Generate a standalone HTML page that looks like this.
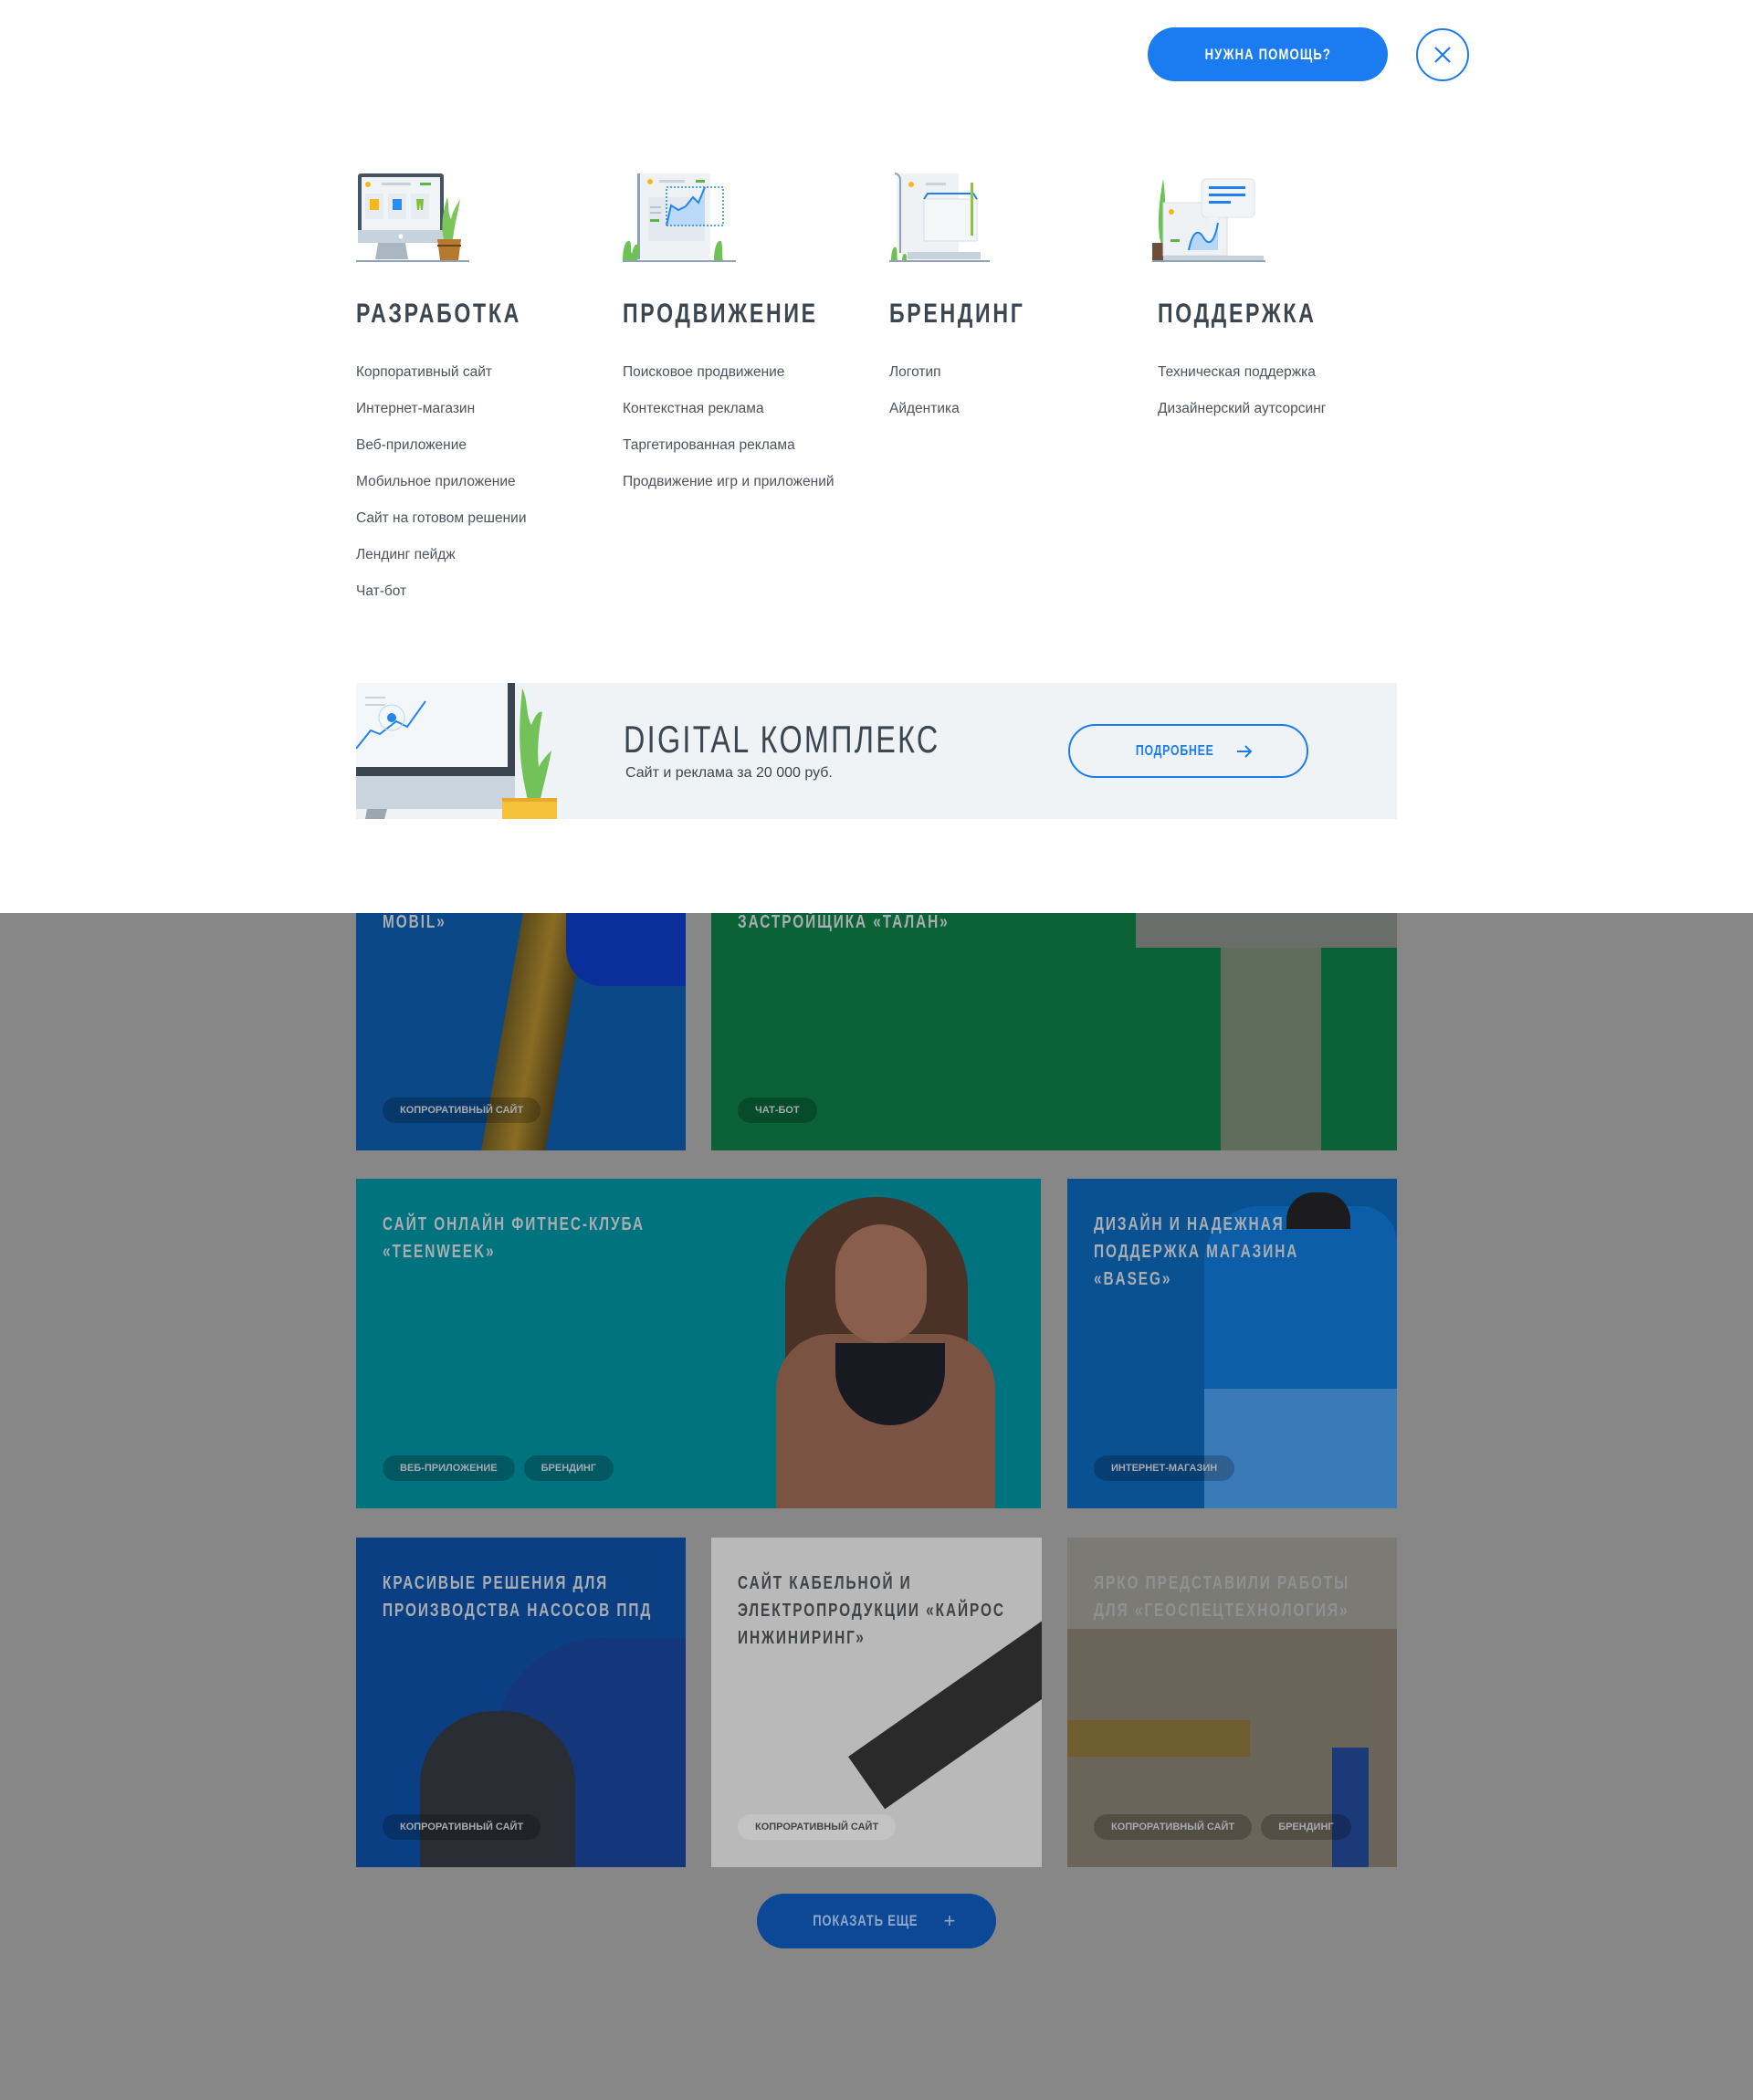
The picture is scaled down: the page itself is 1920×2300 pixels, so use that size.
<!DOCTYPE html>
<html><head><meta charset="utf-8">
<style>
*{margin:0;padding:0;box-sizing:border-box}
body{width:1920px;height:2300px;background:#878787;font-family:"Liberation Sans",sans-serif;position:relative;overflow:hidden}
.sx{display:inline-block;transform:scaleX(.77);transform-origin:left center;white-space:nowrap}
.sc{display:inline-block;transform:scaleX(.77);transform-origin:center center;white-space:nowrap}
#panel{position:absolute;left:0;top:0;width:1920px;height:1000px;background:#fff}
.help{position:absolute;left:1257px;top:30px;width:263px;height:59px;border-radius:30px;background:#1a7cf0;color:#fff;font-weight:bold;font-size:17px;letter-spacing:1.5px;display:flex;align-items:center;justify-content:center}
.close{position:absolute;left:1551px;top:31px;width:58px;height:58px;border:2px solid #1a7cf0;border-radius:50%}
.col{position:absolute;top:188px}
.col svg{display:block}
.col h2{position:absolute;top:139px;left:0;white-space:nowrap;font-size:30px;font-weight:bold;letter-spacing:3.5px;color:#3b4650}
.col ul{position:absolute;top:210px;left:0;list-style:none;white-space:nowrap}
.col li{font-size:15.5px;color:#4b545c;height:40px;line-height:20px}
.banner{position:absolute;left:390px;top:748px;width:1140px;height:149px;background:#f0f3f6;overflow:hidden}
.banner h3{position:absolute;left:293px;top:38px;font-size:42px;font-weight:normal;letter-spacing:3px;color:#3b4650}
.banner p{position:absolute;left:295px;top:90px;font-size:16px;color:#3b4650}
.more{position:absolute;left:780px;top:45px;width:263px;height:59px;border:2px solid #1a7cf0;border-radius:30px;color:#1a7cf0;font-weight:bold;font-size:16px;letter-spacing:1px;display:flex;align-items:center;justify-content:center}
.card{position:absolute;overflow:hidden}
.card .t{position:absolute;left:29px;top:35px;font-size:20px;font-weight:bold;letter-spacing:2.5px;line-height:30px;color:#a8adb2;z-index:2}
.tags{position:absolute;left:29px;bottom:0;height:58px;display:flex;gap:10px;z-index:2}
.tag{height:28px;padding:0 19px;border-radius:14px;background:rgba(0,0,0,.22);color:#a6aaae;font-size:11px;font-weight:bold;letter-spacing:0;line-height:28px;white-space:nowrap}
.show{position:absolute;left:829px;top:2074px;width:262px;height:60px;border-radius:30px;background:#0c4896;color:#8fa7c8;font-weight:bold;font-size:17px;letter-spacing:1px;display:flex;align-items:center;justify-content:center}
</style></head><body>
<div id="panel">
  <div class="help"><span class="sc">НУЖНА ПОМОЩЬ?</span></div>
  <div class="close"><svg width="54" height="54" viewBox="0 0 54 54"><path d="M19 19L35 35M35 19L19 35" stroke="#1a7cf0" stroke-width="2.2"/></svg></div>

  <div class="col" style="left:390px">
    <svg width="125" height="102" viewBox="0 0 125 102">
      <rect x="2" y="2" width="94" height="75" rx="3" fill="#465360"/>
      <rect x="6" y="6" width="86" height="58" fill="#f1f4f7"/>
      <rect x="2" y="64" width="94" height="14" fill="#c7d3dc"/>
      <circle cx="49" cy="71" r="2.5" fill="#fff"/>
      <path d="M24 78h30l3 18H21z" fill="#aab7c2"/>
      <circle cx="13" cy="14" r="3" fill="#f6b81c"/>
      <rect x="28" y="12" width="32" height="3" fill="#c9d2da"/><rect x="70" y="12" width="12" height="3" fill="#5db549"/>
      <rect x="10" y="24" width="20" height="28" fill="#e7ecf0"/><rect x="35" y="24" width="20" height="28" fill="#e7ecf0"/><rect x="60" y="24" width="20" height="28" fill="#e7ecf0"/>
      <path d="M15 30h10v12h-10z" fill="#f7b917"/><path d="M40 30h10v12h-10z" fill="#2d8cf0"/><path d="M66 30h8l-1 12h-2l-1-8-1 8h-2z" fill="#7cbf3a"/>
      <path d="M96 74c-4-16 0-34 4-46 2 10 0 16 4 24 2-10 6-14 10-22 -2 14 -6 26 -8 44z" fill="#7cc55a"/>
      <path d="M89 74h26l-3 23h-20z" fill="#b57a2e"/><rect x="89" y="80" width="26" height="2" fill="#6b4317"/>
      <rect x="0" y="97" width="124" height="2" fill="#8ea2b4"/>
    </svg>
    <h2><span class="sx">РАЗРАБОТКА</span></h2>
    <ul><li>Корпоративный сайт</li><li>Интернет-магазин</li><li>Веб-приложение</li><li>Мобильное приложение</li><li>Сайт на готовом решении</li><li>Лендинг пейдж</li><li>Чат-бот</li></ul>
  </div>

  <div class="col" style="left:682px">
    <svg width="125" height="102" viewBox="0 0 125 102">
      <rect x="16" y="2" width="80" height="94" fill="#eef2f5"/><rect x="16" y="2" width="3" height="94" fill="#8ea2b4"/>
      <circle cx="30" cy="11" r="3" fill="#f6b81c"/><rect x="40" y="9" width="28" height="3" fill="#c9d2da"/><rect x="80" y="9" width="10" height="3" fill="#5db549"/>
      <rect x="28" y="28" width="62" height="48" fill="#e3e9ee"/>
      <rect x="30" y="38" width="12" height="2" fill="#b9c4cd"/><rect x="30" y="44" width="12" height="2" fill="#b9c4cd"/><rect x="30" y="52" width="10" height="3" fill="#5db549"/>
      <path d="M48 59L53 37 61 42 69 38 77 28 83 34 90 17V59z" fill="#bcd9f7"/>
      <path d="M48 59L53 37 61 42 69 38 77 28 83 34 90 17" fill="none" stroke="#1f86ee" stroke-width="2"/>
      <rect x="48" y="17" width="62" height="42" fill="none" stroke="#1f86ee" stroke-width="1.5" stroke-dasharray="2 2"/>
      <path d="M0 98c0-16 4-24 8-22 2 6 0 10 2 14 2-10 6-14 8-6 0 4-2 8-2 14z" fill="#6cc253"/>
      <path d="M100 98c0-16 4-24 8-22 2 8 0 14 2 22z" fill="#6cc253"/>
      <rect x="0" y="97" width="124" height="2" fill="#8ea2b4"/>
    </svg>
    <h2><span class="sx">ПРОДВИЖЕНИЕ</span></h2>
    <ul><li>Поисковое продвижение</li><li>Контекстная реклама</li><li>Таргетированная реклама</li><li>Продвижение игр и приложений</li></ul>
  </div>

  <div class="col" style="left:974px">
    <svg width="125" height="102" viewBox="0 0 125 102">
      <path d="M6 2h70v90H18c-6 0-10-4-10-10V8c0-4-2-6-2-6z" fill="#eef2f5"/>
      <path d="M6 2c3 0 6 3 6 7v80" fill="none" stroke="#8ea2b4" stroke-width="2"/>
      <circle cx="24" cy="14" r="3" fill="#f6b81c"/><rect x="40" y="12" width="22" height="3" fill="#c9d2da"/>
      <rect x="38" y="30" width="58" height="46" fill="#f4f6f8" stroke="#d5dde3"/>
      <path d="M38 30l4-6h50l4 6" fill="none" stroke="#1f7fee" stroke-width="2"/>
      <rect x="89" y="12" width="3" height="58" fill="#8cc63f"/>
      <rect x="20" y="88" width="80" height="8" fill="#c7d3dc"/>
      <path d="M2 98c0-14 4-18 6-14 1 4 0 8 1 14z" fill="#6cc253"/><path d="M14 98c0-8 3-10 5-6v6z" fill="#6cc253"/>
      <rect x="0" y="97" width="110" height="2" fill="#8ea2b4"/>
    </svg>
    <h2><span class="sx">БРЕНДИНГ</span></h2>
    <ul><li>Логотип</li><li>Айдентика</li></ul>
  </div>

  <div class="col" style="left:1262px">
    <svg width="125" height="102" viewBox="0 0 125 102">
      <path d="M10 80c-6-20-2-50 2-72 3 20 2 40 4 72z" fill="#6cc253"/>
      <rect x="0" y="78" width="12" height="20" fill="#6b4f3a"/>
      <rect x="12" y="34" width="70" height="58" fill="#eef2f5" stroke="#d5dde3"/>
      <circle cx="21" cy="44" r="3" fill="#f6b81c"/><rect x="20" y="74" width="10" height="3" fill="#5db549"/>
      <path d="M40 86c4-20 10-24 16-14 6 10 12 6 16-16v30z" fill="#b8d6f6"/>
      <path d="M40 86c4-20 10-24 16-14 6 10 12 6 16-16" fill="none" stroke="#1f86ee" stroke-width="2"/>
      <rect x="12" y="92" width="110" height="6" fill="#c7d3dc"/>
      <rect x="54" y="8" width="58" height="42" rx="5" fill="#f1f4f7" stroke="#dde3e8"/>
      <path d="M62 50l4 8 6-8z" fill="#f1f4f7"/>
      <rect x="62" y="16" width="40" height="3" fill="#1f7fee"/><rect x="62" y="24" width="40" height="3" fill="#1f7fee"/><rect x="62" y="32" width="24" height="3" fill="#1f7fee"/>
      <rect x="0" y="97" width="124" height="2" fill="#8ea2b4"/>
    </svg>
    <h2 style="left:6px"><span class="sx">ПОДДЕРЖКА</span></h2>
    <ul style="left:6px"><li>Техническая поддержка</li><li>Дизайнерский аутсорсинг</li></ul>
  </div>

  <div class="banner">
    <svg width="250" height="149" viewBox="0 0 250 149" style="position:absolute;left:0;top:0">
      <rect x="0" y="0" width="172" height="100" fill="#f4f7fa"/>
      <rect x="166" y="0" width="8" height="100" fill="#3a4550"/>
      <rect x="0" y="92" width="174" height="10" fill="#3a4550"/>
      <rect x="0" y="102" width="174" height="36" fill="#c9d4dd"/>
      <path d="M12 138h22l-3 11H10z" fill="#9aa6b0"/>
      <path d="M0 72l16-20 10 4 18-14 12 6 20-28" fill="none" stroke="#1f86ee" stroke-width="2"/>
      <circle cx="39" cy="38" r="5" fill="#1f86ee"/><circle cx="39" cy="38" r="14" fill="none" stroke="#b9d6f6"/>
      <rect x="10" y="15" width="22" height="2" fill="#c9d2da"/><rect x="10" y="23" width="22" height="2" fill="#c9d2da"/>
      <path d="M190 136c-10-40-14-70-8-130 6 10 4 30 10 40 4-10 8-16 12-14-4 20-6 40-4 60 4-8 10-14 14-18-4 22-10 42-14 62z" fill="#72c159"/>
      <rect x="160" y="128" width="60" height="21" fill="#f5c23a"/><rect x="160" y="126" width="60" height="4" fill="#e8a82a"/>
    </svg>
    <h3><span class="sx">DIGITAL КОМПЛЕКС</span></h3>
    <p>Сайт и реклама за 20 000 руб.</p>
    <div class="more"><span class="sc">ПОДРОБНЕЕ</span>&nbsp;&nbsp;<svg width="18" height="14" viewBox="0 0 18 14"><path d="M1 7h15M10 1l6 6-6 6" fill="none" stroke="#1a7cf0" stroke-width="2"/></svg></div>
  </div>
</div>

<!-- row1 -->
<div class="card" style="left:390px;top:1000px;width:361px;height:260px;background:#0b4887">
  <div style="position:absolute;left:160px;top:0;width:70px;height:260px;background:linear-gradient(90deg,#5a4a1c,#8a6d24,#4a3b15);transform:skewX(-10deg)"></div>
  <div style="position:absolute;left:230px;top:0;width:131px;height:80px;background:#0a2f9a;border-bottom-left-radius:40px"></div>
  <div class="t" style="top:-5px"><span class="sx">MOBIL»</span></div>
  <div class="tags"><div class="tag">КОПРОРАТИВНЫЙ САЙТ</div></div>
</div>
<div class="card" style="left:779px;top:1000px;width:751px;height:260px;background:#0a6236">
  <div style="position:absolute;left:465px;top:0;width:286px;height:38px;background:#6a6e6a"></div>
  <div style="position:absolute;left:558px;top:38px;width:110px;height:222px;background:#5f6d5a"></div>
  <div class="t" style="top:-5px"><span class="sx">ЗАСТРОЙЩИКА «ТАЛАН»</span></div>
  <div class="tags"><div class="tag">ЧАТ-БОТ</div></div>
</div>
<!-- row2 -->
<div class="card" style="left:390px;top:1291px;width:750px;height:361px;background:#00737e">
  <div style="position:absolute;left:470px;top:20px;width:200px;height:340px;background:#4b3226;border-radius:100px 100px 0 0"></div>
  <div style="position:absolute;left:460px;top:170px;width:240px;height:200px;background:#7a5343;border-radius:60px 60px 0 0"></div>
  <div style="position:absolute;left:525px;top:180px;width:120px;height:90px;background:#181a22;border-radius:0 0 60px 60px"></div>
  <div style="position:absolute;left:525px;top:50px;width:100px;height:130px;background:#8a5e4c;border-radius:50px"></div>
  <div class="t"><span class="sx">САЙТ ОНЛАЙН ФИТНЕС-КЛУБА<br>«TEENWEEK»</span></div>
  <div class="tags"><div class="tag">ВЕБ-ПРИЛОЖЕНИЕ</div><div class="tag">БРЕНДИНГ</div></div>
</div>
<div class="card" style="left:1169px;top:1291px;width:361px;height:361px;background:#0a5192">
  <div style="position:absolute;left:150px;top:30px;width:211px;height:331px;background:#0d5ea8;border-radius:60px 40px 0 0"></div>
  <div style="position:absolute;left:150px;top:230px;width:211px;height:131px;background:#3b7ab8"></div>
  <div style="position:absolute;left:240px;top:15px;width:70px;height:40px;background:#1c1c1e;border-radius:30px 30px 0 0"></div>
  <div class="t"><span class="sx">ДИЗАЙН И НАДЕЖНАЯ<br>ПОДДЕРЖКА МАГАЗИНА<br>«BASEG»</span></div>
  <div class="tags"><div class="tag">ИНТЕРНЕТ-МАГАЗИН</div></div>
</div>
<!-- row3 -->
<div class="card" style="left:390px;top:1684px;width:361px;height:361px;background:#0b3f84">
  <div style="position:absolute;left:150px;top:110px;width:230px;height:260px;background:#14367a;border-radius:120px 0 0 0"></div>
  <div style="position:absolute;left:70px;top:190px;width:170px;height:171px;background:#2a2d33;border-radius:80px 80px 0 0"></div>
  <div class="t"><span class="sx">КРАСИВЫЕ РЕШЕНИЯ ДЛЯ<br>ПРОИЗВОДСТВА НАСОСОВ ППД</span></div>
  <div class="tags"><div class="tag">КОПРОРАТИВНЫЙ САЙТ</div></div>
</div>
<div class="card" style="left:779px;top:1684px;width:362px;height:361px;background:#b9b9b9">
  <div style="position:absolute;left:150px;width:260px;height:70px;background:#2a2a2a;transform:rotate(-35deg);transform-origin:left top;top:240px"></div>
  <div class="t" style="color:#3e4348"><span class="sx">САЙТ КАБЕЛЬНОЙ И<br>ЭЛЕКТРОПРОДУКЦИИ «КАЙРОС<br>ИНЖИНИРИНГ»</span></div>
  <div class="tags"><div class="tag" style="background:rgba(255,255,255,.15);color:#444">КОПРОРАТИВНЫЙ САЙТ</div></div>
</div>
<div class="card" style="left:1169px;top:1684px;width:361px;height:361px;background:#7b7a74">
  <div style="position:absolute;left:0;top:100px;width:361px;height:261px;background:#6a6558"></div>
  <div style="position:absolute;left:0;top:200px;width:200px;height:40px;background:#6f5f30"></div>
  <div style="position:absolute;left:290px;top:230px;width:40px;height:131px;background:#1c3a78"></div>
  <div class="t" style="color:#8e9194"><span class="sx">ЯРКО ПРЕДСТАВИЛИ РАБОТЫ<br>ДЛЯ «ГЕОСПЕЦТЕХНОЛОГИЯ»</span></div>
  <div class="tags"><div class="tag">КОПРОРАТИВНЫЙ САЙТ</div><div class="tag">БРЕНДИНГ</div></div>
</div>

<div class="show"><span class="sc">ПОКАЗАТЬ ЕЩЕ</span>&nbsp;&nbsp;<span style="font-size:22px;font-weight:normal">+</span></div>
</body></html>
